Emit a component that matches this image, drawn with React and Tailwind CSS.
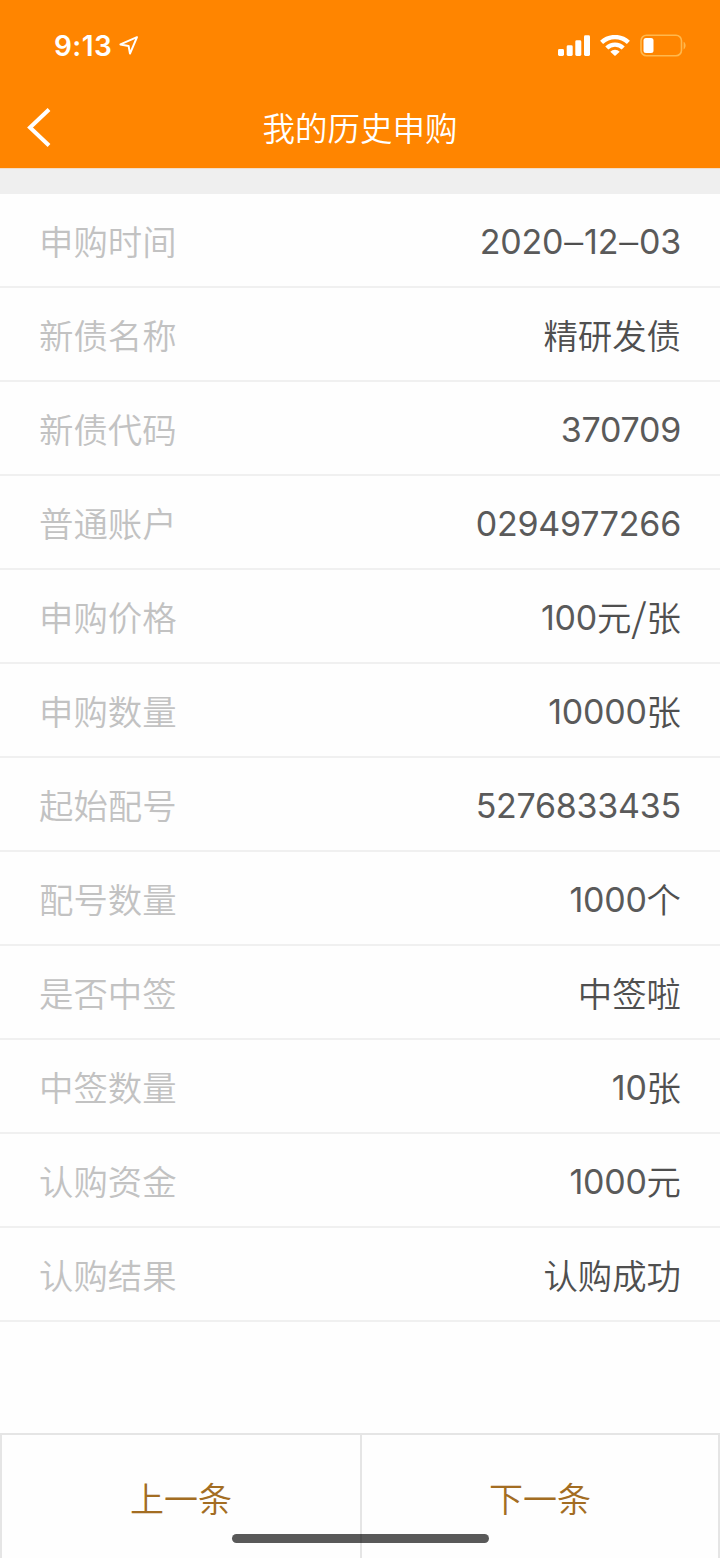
const records = [
    { label: '申购时间', value: '2020–12–03' },
    { label: '新债名称', value: '精研发债' },
    { label: '新债代码', value: '370709' },
    { label: '普通账户', value: '0294977266' },
    { label: '申购价格', value: '100元/张' },
    { label: '申购数量', value: '10000张' },
    { label: '起始配号', value: '5276833435' },
    { label: '配号数量', value: '1000个' },
    { label: '是否中签', value: '中签啦' },
    { label: '中签数量', value: '10张' },
    { label: '认购资金', value: '1000元' },
    { label: '认购结果', value: '认购成功' },
];

const StatusBar = () => (
    <div className="flex h-[88px] items-center justify-between pt-1 pr-[34px] pl-[54px]">
        <div className="flex items-center gap-[7px]">
            <span className="font-['Inter',sans-serif] text-[28px] leading-none font-semibold tracking-[0.4px]">9:13</span>
            <svg width="20" height="20" viewBox="0 0 20 20" fill="none" stroke="currentColor" strokeWidth="2" strokeLinejoin="round">
                <path d="M18 1.2 L1.4 8.4 L9.6 9.9 L11 17.6 Z" />
            </svg>
        </div>
        <div className="flex items-center gap-[10px]">
            <svg width="32" height="22" viewBox="0 0 32 22" fill="currentColor">
                <rect x="0" y="14" width="6" height="7" rx="1.4" />
                <rect x="8.7" y="10.3" width="6" height="10.7" rx="1.4" />
                <rect x="17.3" y="5.3" width="6" height="15.7" rx="1.4" />
                <rect x="26" y="0.3" width="6" height="20.7" rx="1.4" />
            </svg>
            <svg width="30" height="22" viewBox="0 0 30 22" fill="none" stroke="currentColor" strokeWidth="4.4">
                <path d="M1.6 7.4 A19.5 19.5 0 0 1 28.4 7.4" />
                <path d="M6.8 13 A11.7 11.7 0 0 1 23.2 13" />
                <path d="M15 21 L10.3 16.7 A6.8 6.8 0 0 1 19.7 16.7 Z" fill="currentColor" stroke="none" />
            </svg>
            <svg width="46" height="24" viewBox="0 0 46 24" fill="none">
                <rect x="1" y="1.2" width="40.5" height="20.6" rx="5.5" stroke="#ffb84d" strokeWidth="1.6" />
                <rect x="3.5" y="4" width="10" height="15" rx="2.5" fill="#fff" />
                <path d="M43.6 7.8 C46.2 9 46.2 14.2 43.6 15.4 Z" fill="#ffb84d" />
            </svg>
        </div>
    </div>
);

const Header = () => (
    <header className="h-[168px] bg-[#ff8500] text-white">
        <StatusBar />
        <div className="grid h-20 grid-cols-[1fr_auto_1fr] items-center">
            <button className="ml-[27px] w-6" aria-label="返回">
                <svg width="24" height="40" viewBox="0 0 24 40" fill="none" stroke="currentColor" strokeWidth="4">
                    <path d="M22 1.5 L3 19.5 L22 37.5" />
                </svg>
            </button>
            <h1 className="pb-[2px] text-[32.5px] leading-none font-[350]">我的历史申购</h1>
        </div>
    </header>
);

// Digits and dashes each sit in their own face beside the Chinese characters
const Value = ({ text }) => (
    <span className="flex items-center font-[350] text-[#4f4f4f]">
        {text.split(/(\d+|–|\/)/).filter(Boolean).map((part, i) => {
            if (part === '–') return <span key={i} className="mx-px pb-[3px] font-['Liberation_Sans',sans-serif] text-[34px]">{part}</span>;
            if (part === '/') return <span key={i} className="pb-1 text-[39px]">{part}</span>;
            if (/\d/.test(part)) return <span key={i} className="font-['Inter',sans-serif] text-[34px] font-normal tracking-[-0.25px] text-[#5a5a5a]">{part}</span>;
            return <span key={i} className="pb-[3px]">{part}</span>;
        })}
    </span>
);

const App = () => {
    return (
        <div className="flex h-[1558px] w-[720px] flex-col bg-[#fefefe] font-['Noto_Sans_CJK_SC',sans-serif]">
            <Header />
            <div className="h-[26px] shrink-0 border-t border-[#f3ddc5] bg-[#efefef]" />

            <ul>
                {records.map(({ label, value }) => (
                    <li key={label} className="flex h-[94px] items-center justify-between border-b-2 border-[#f0f0f0] px-[39px] pt-[3px] text-[34.4px] leading-none">
                        <span className="pb-[2px] font-[350] text-[#c2c2c2]">{label}</span>
                        <Value text={value} />
                    </li>
                ))}
            </ul>

            <footer className="relative mt-auto grid h-[125px] grid-cols-2 border-x-2 border-t-2 border-[#e5e5e5] text-[34px] leading-none font-[350] text-[#a36d22]">
                <button className="pt-[2px]">上一条</button>
                <button className="border-l-2 border-[#e5e5e5] pt-[2px]">下一条</button>
                <div className="absolute bottom-[15px] left-[230px] h-[9px] w-[257px] rounded-full bg-black/65" />
            </footer>
        </div>
    );
};

export default App;
